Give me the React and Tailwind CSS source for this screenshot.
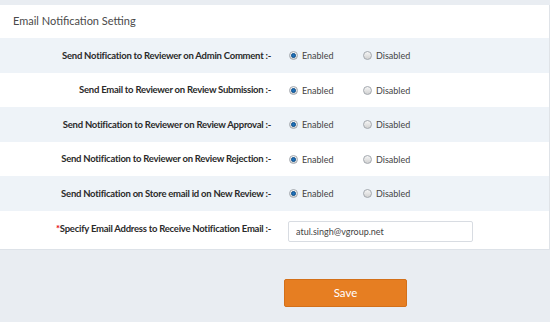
import React, { useState } from 'react';

const rows = [
  'Send Notification to Reviewer on Admin Comment :-',
  'Send Email to Reviewer on Review Submission :-',
  'Send Notification to Reviewer on Review Approval :-',
  'Send Notification to Reviewer on Review Rejection :-',
  'Send Notification on Store email id on New Review :-',
];

const Radio = ({ checked, label, onClick }) => (
  <button type="button" onClick={onClick} className="flex items-center gap-[4px] text-[9px] text-[#444]">
    <span className="w-[9px] h-[9px] rounded-full border border-[#a3a8ae] bg-gradient-to-b from-[#f6f6f6] to-[#d2d2d2] flex items-center justify-center">
      {checked && <span className="w-[5px] h-[5px] rounded-full bg-[#1d6fb8] border border-[#0f4f8a]"></span>}
    </span>
    {label}
  </button>
);

const App = () => {
  const [values, setValues] = useState(rows.map(() => true));
  const [email, setEmail] = useState('atul.singh@vgroup.net');

  return (
    <div className="w-[550px] h-[322px] bg-[#e9edf2] pt-[5px] overflow-hidden" style={{ fontFamily: 'Lato, "Open Sans", sans-serif' }}>
      <div className="bg-white border-r border-[#dfe3e8]">
        <div className="h-[33px] flex items-center pl-[13px] text-[11px] text-[#4a4a4a]">
          Email Notification Setting
        </div>

        {rows.map((label, idx) => (
          <div key={idx} className={`h-[34.5px] flex items-center pt-[1px] ${idx % 2 === 0 ? 'bg-[#eef3f8]' : 'bg-white'}`}>
            <div className="w-[271px] text-right text-[9.5px] font-bold text-[#2a2a2a] tracking-[-0.25px]">{label}</div>
            <div className="flex items-center pl-[18px]">
              <div className="w-[74px]">
                <Radio checked={values[idx]} label="Enabled" onClick={() => setValues(values.map((v, i) => (i === idx ? true : v)))} />
              </div>
              <Radio checked={!values[idx]} label="Disabled" onClick={() => setValues(values.map((v, i) => (i === idx ? false : v)))} />
            </div>
          </div>
        ))}

        <div className="h-[39px] flex items-center border-b border-[#dde2e8]">
          <div className="w-[271px] text-right text-[9.5px] font-bold text-[#2a2a2a] tracking-[-0.25px]">
            <span className="text-red-600">*</span>Specify Email Address to Receive Notification Email :-
          </div>
          <div className="pl-[17px]">
            <input
              value={email}
              onChange={e => setEmail(e.target.value)}
              className="w-[185px] h-[21px] border border-[#d8dce2] rounded-[2px] px-[7px] text-[9px] text-[#444] outline-none"
            />
          </div>
        </div>
      </div>

      <div className="pl-[284px] pt-[29px]">
        <button type="button" className="w-[123px] h-[28px] bg-[#e67e22] border border-[#d3701a] rounded-[2px] text-white text-[11.5px]">
          Save
        </button>
      </div>
    </div>
  );
};

export default App;
